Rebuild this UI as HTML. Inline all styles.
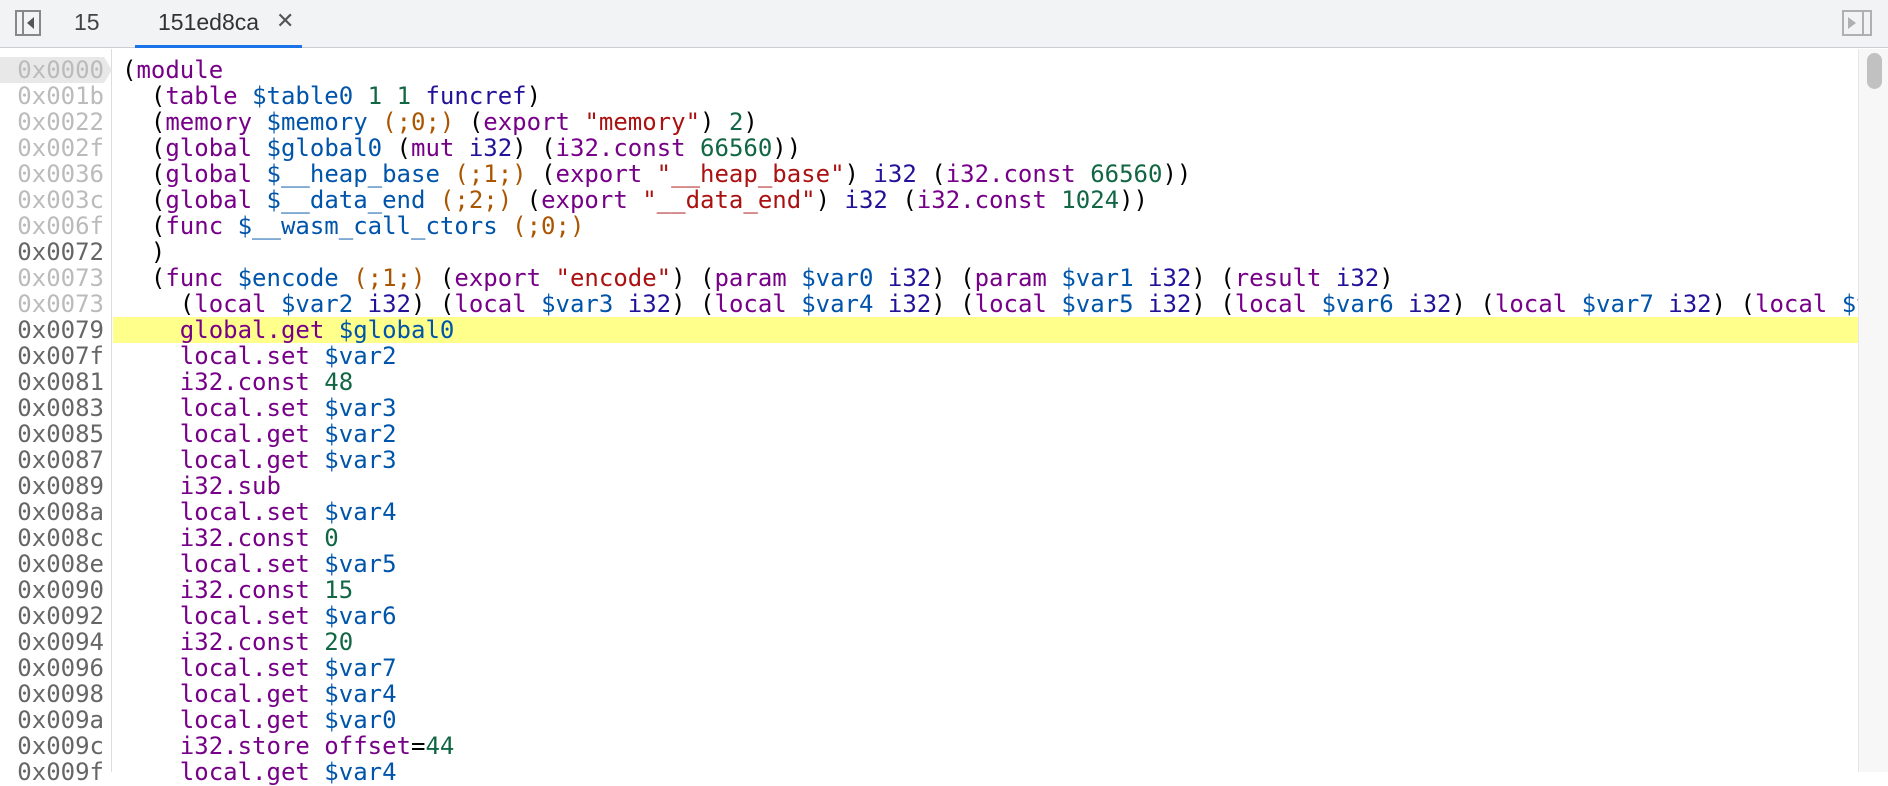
<!DOCTYPE html>
<html><head><meta charset="utf-8"><style>
*{margin:0;padding:0;box-sizing:border-box}
body{width:1888px;height:772px;overflow:hidden;background:#fff;position:relative;font-family:"Liberation Sans",sans-serif}
.hdr{position:absolute;left:0;top:0;width:1888px;height:48px;background:#f1f3f4;border-bottom:1px solid #cbcdd1}
.tab{position:absolute;top:9px;font-size:23px;color:#333}
.ul{position:absolute;left:135px;top:45px;width:167px;height:3px;background:#1a73e8}
.gut{position:absolute;left:0;top:49px;width:112px;height:723px;border-right:1px solid #ddd;background:#fff}
.code{position:absolute;left:0;top:57px;width:1858px;font-family:"DejaVu Sans Mono","Liberation Mono",monospace;font-size:24px}
.r{height:26px;line-height:26px;white-space:pre;position:relative}
.a{position:absolute;left:0;width:104px;text-align:right;color:#666}
.a.l{color:#bbb}
.t0{position:absolute;left:122px;color:#000}
.hl{background:#ffff8c}
.k{color:#770088}.v{color:#0055aa}.t{color:#221199}.n{color:#116644}.s{color:#aa1111}.c{color:#aa5500}
.sb{position:absolute;left:1858px;top:49px;width:30px;height:723px;background:#f7f7f7;border-left:1px solid #e6e6e6}
.th{position:absolute;left:8px;top:4px;width:15px;height:36px;border-radius:8px;background:#c1c1c1}
</style></head><body>
<div class="hdr">
<svg style="position:absolute;left:15px;top:10px" width="26" height="26" viewBox="0 0 26 26"><rect x="1" y="1" width="24" height="24" fill="none" stroke="#888" stroke-width="2"/><line x1="8" y1="1" x2="8" y2="25" stroke="#888" stroke-width="2"/><path d="M19 7 L12 13 L19 19Z" fill="#555"/></svg>
<div class="tab" style="left:74px;color:#444">15</div>
<div class="tab" style="left:158px">151ed8ca</div>
<div class="tab" style="left:276px;color:#555;font-size:22px;top:8px">✕</div>
<div class="ul"></div>
<svg style="position:absolute;left:1842px;top:10px" width="30" height="26" viewBox="0 0 30 26"><rect x="1" y="1" width="28" height="24" fill="none" stroke="#b0b0b0" stroke-width="2"/><line x1="21" y1="1" x2="21" y2="25" stroke="#b0b0b0" stroke-width="2"/><path d="M6 7 L14 13 L6 19Z" fill="#b0b0b0"/></svg>
</div>
<div class="gut"></div>
<div class="code">
<div class="r"><span class="a l" style="background:#e8e8e8;width:112px;padding-right:8px;clip-path:polygon(0 0,104px 0,112px 50%,104px 100%,0 100%)">0x0000</span><span class="t0">(<span class="k">module</span></span></div>
<div class="r"><span class="a l">0x001b</span><span class="t0">  (<span class="k">table</span> <span class="v">$table0</span> <span class="n">1</span> <span class="n">1</span> <span class="t">funcref</span>)</span></div>
<div class="r"><span class="a l">0x0022</span><span class="t0">  (<span class="k">memory</span> <span class="v">$memory</span> <span class="c">(;0;)</span> (<span class="k">export</span> <span class="s">"memory"</span>) <span class="n">2</span>)</span></div>
<div class="r"><span class="a l">0x002f</span><span class="t0">  (<span class="k">global</span> <span class="v">$global0</span> (<span class="k">mut</span> <span class="t">i32</span>) (<span class="k">i32.const</span> <span class="n">66560</span>))</span></div>
<div class="r"><span class="a l">0x0036</span><span class="t0">  (<span class="k">global</span> <span class="v">$__heap_base</span> <span class="c">(;1;)</span> (<span class="k">export</span> <span class="s">"__heap_base"</span>) <span class="t">i32</span> (<span class="k">i32.const</span> <span class="n">66560</span>))</span></div>
<div class="r"><span class="a l">0x003c</span><span class="t0">  (<span class="k">global</span> <span class="v">$__data_end</span> <span class="c">(;2;)</span> (<span class="k">export</span> <span class="s">"__data_end"</span>) <span class="t">i32</span> (<span class="k">i32.const</span> <span class="n">1024</span>))</span></div>
<div class="r"><span class="a l">0x006f</span><span class="t0">  (<span class="k">func</span> <span class="v">$__wasm_call_ctors</span> <span class="c">(;0;)</span></span></div>
<div class="r"><span class="a">0x0072</span><span class="t0">  )</span></div>
<div class="r"><span class="a l">0x0073</span><span class="t0">  (<span class="k">func</span> <span class="v">$encode</span> <span class="c">(;1;)</span> (<span class="k">export</span> <span class="s">"encode"</span>) (<span class="k">param</span> <span class="v">$var0</span> <span class="t">i32</span>) (<span class="k">param</span> <span class="v">$var1</span> <span class="t">i32</span>) (<span class="k">result</span> <span class="t">i32</span>)</span></div>
<div class="r"><span class="a l">0x0073</span><span class="t0">    (<span class="k">local</span> <span class="v">$var2</span> <span class="t">i32</span>) (<span class="k">local</span> <span class="v">$var3</span> <span class="t">i32</span>) (<span class="k">local</span> <span class="v">$var4</span> <span class="t">i32</span>) (<span class="k">local</span> <span class="v">$var5</span> <span class="t">i32</span>) (<span class="k">local</span> <span class="v">$var6</span> <span class="t">i32</span>) (<span class="k">local</span> <span class="v">$var7</span> <span class="t">i32</span>) (<span class="k">local</span> <span class="v">$v</span></span></div>
<div class="r"><span class="a">0x0079</span><span class="t0 hl" style="left:113px;width:1745px;padding-left:9px">    <span class="k">global.get</span> <span class="v">$global0</span></span></div>
<div class="r"><span class="a">0x007f</span><span class="t0">    <span class="k">local.set</span> <span class="v">$var2</span></span></div>
<div class="r"><span class="a">0x0081</span><span class="t0">    <span class="k">i32.const</span> <span class="n">48</span></span></div>
<div class="r"><span class="a">0x0083</span><span class="t0">    <span class="k">local.set</span> <span class="v">$var3</span></span></div>
<div class="r"><span class="a">0x0085</span><span class="t0">    <span class="k">local.get</span> <span class="v">$var2</span></span></div>
<div class="r"><span class="a">0x0087</span><span class="t0">    <span class="k">local.get</span> <span class="v">$var3</span></span></div>
<div class="r"><span class="a">0x0089</span><span class="t0">    <span class="k">i32.sub</span></span></div>
<div class="r"><span class="a">0x008a</span><span class="t0">    <span class="k">local.set</span> <span class="v">$var4</span></span></div>
<div class="r"><span class="a">0x008c</span><span class="t0">    <span class="k">i32.const</span> <span class="n">0</span></span></div>
<div class="r"><span class="a">0x008e</span><span class="t0">    <span class="k">local.set</span> <span class="v">$var5</span></span></div>
<div class="r"><span class="a">0x0090</span><span class="t0">    <span class="k">i32.const</span> <span class="n">15</span></span></div>
<div class="r"><span class="a">0x0092</span><span class="t0">    <span class="k">local.set</span> <span class="v">$var6</span></span></div>
<div class="r"><span class="a">0x0094</span><span class="t0">    <span class="k">i32.const</span> <span class="n">20</span></span></div>
<div class="r"><span class="a">0x0096</span><span class="t0">    <span class="k">local.set</span> <span class="v">$var7</span></span></div>
<div class="r"><span class="a">0x0098</span><span class="t0">    <span class="k">local.get</span> <span class="v">$var4</span></span></div>
<div class="r"><span class="a">0x009a</span><span class="t0">    <span class="k">local.get</span> <span class="v">$var0</span></span></div>
<div class="r"><span class="a">0x009c</span><span class="t0">    <span class="k">i32.store</span> <span class="k">offset</span>=<span class="n">44</span></span></div>
<div class="r"><span class="a">0x009f</span><span class="t0">    <span class="k">local.get</span> <span class="v">$var4</span></span></div>
</div>
<div class="sb"><div class="th"></div></div>
</body></html>
